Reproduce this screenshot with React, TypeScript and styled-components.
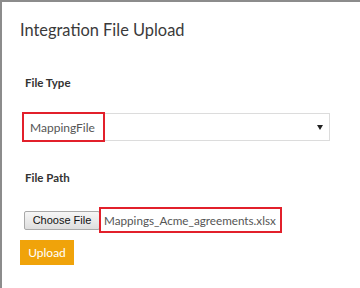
import styled, { createGlobalStyle } from "styled-components";

const GlobalStyle = createGlobalStyle`
  html, body {
    margin: 0;
    padding: 0;
    background: #ffffff;
  }
  body {
    font-family: Lato, "Open Sans", sans-serif;
  }
`;

const Panel = styled.div`
  box-sizing: border-box;
  width: 360px;
  height: 288px;
  border-top: 2px solid #8c8c8c;
  border-left: 2px solid #8c8c8c;
  padding: 0 0 0 18px;
  background: #fff;
  overflow: hidden;
`;

const Title = styled.h2`
  margin: 0;
  padding-top: 17px;
  font-family: Lato, "Open Sans", sans-serif;
  font-weight: 400;
  font-size: 16.4px;
  line-height: 22px;
  color: #3a3a3a;
`;

const Form = styled.div`
  display: flex;
  flex-direction: column;
  padding: 0 0 0 2px;
`;

const Label = styled.div<{ $top: number }>`
  margin-top: ${(p) => p.$top}px;
  padding-left: 3px;
  font-family: Lato, "Open Sans", sans-serif;
  font-weight: 700;
  font-size: 11.5px;
  line-height: 14px;
  color: #333;
`;

const Select = styled.div`
  box-sizing: border-box;
  margin-top: 23px;
  width: 308px;
  height: 28px;
  border: 1px solid #dcdcdc;
  display: flex;
  align-items: center;
  justify-content: space-between;
  padding-right: 6px;
`;

const Highlight = styled.span<{ $pad: number }>`
  box-sizing: border-box;
  border: 2px solid #e2202b;
  display: flex;
  align-items: center;
  padding-left: ${(p) => p.$pad}px;
  font-family: Lato, "Open Sans", sans-serif;
  font-size: 12px;
  color: #555;
`;

const SelectValue = styled(Highlight)`
  margin: -1px 0 -1px -1px;
  width: 83px;
  height: 30px;
`;

const Caret = styled.span`
  width: 0;
  height: 0;
  border-left: 3px solid transparent;
  border-right: 3px solid transparent;
  border-top: 5px solid #222;
`;

const FileRow = styled.div`
  margin-top: 22px;
  display: flex;
  align-items: center;
  padding-left: 2px;
`;

const ChooseButton = styled.button`
  box-sizing: border-box;
  width: 76px;
  height: 19px;
  margin: 0;
  padding: 0;
  border: 1px solid #a9a9a9;
  border-radius: 2px;
  background: linear-gradient(#f6f6f6, #dedede);
  font-family: "Liberation Sans", Arial, sans-serif;
  font-size: 11px;
  color: #111;
`;

const FileName = styled(Highlight)`
  width: 183px;
  height: 26px;
  margin-left: -1px;
  white-space: nowrap;
  font-size: 11.7px;
`;

const UploadButton = styled.button`
  box-sizing: border-box;
  align-self: flex-start;
  margin: 7px 0 0 -2px;
  width: 54px;
  height: 25px;
  border: none;
  padding: 0;
  background: #f0a30a;
  color: #fff;
  font-family: Lato, "Open Sans", sans-serif;
  font-size: 12px;
`;

export default function App() {
  return (
    <>
      <GlobalStyle />
      <Panel>
        <Title>Integration File Upload</Title>
        <Form>
          <Label $top={35}>File Type</Label>
          <Select>
            <SelectValue $pad={6}>MappingFile</SelectValue>
            <Caret />
          </Select>
          <Label $top={30}>File Path</Label>
          <FileRow>
            <ChooseButton>Choose File</ChooseButton>
            <FileName $pad={3}>Mappings_Acme_agreements.xlsx</FileName>
          </FileRow>
          <UploadButton>Upload</UploadButton>
        </Form>
      </Panel>
    </>
  );
}
